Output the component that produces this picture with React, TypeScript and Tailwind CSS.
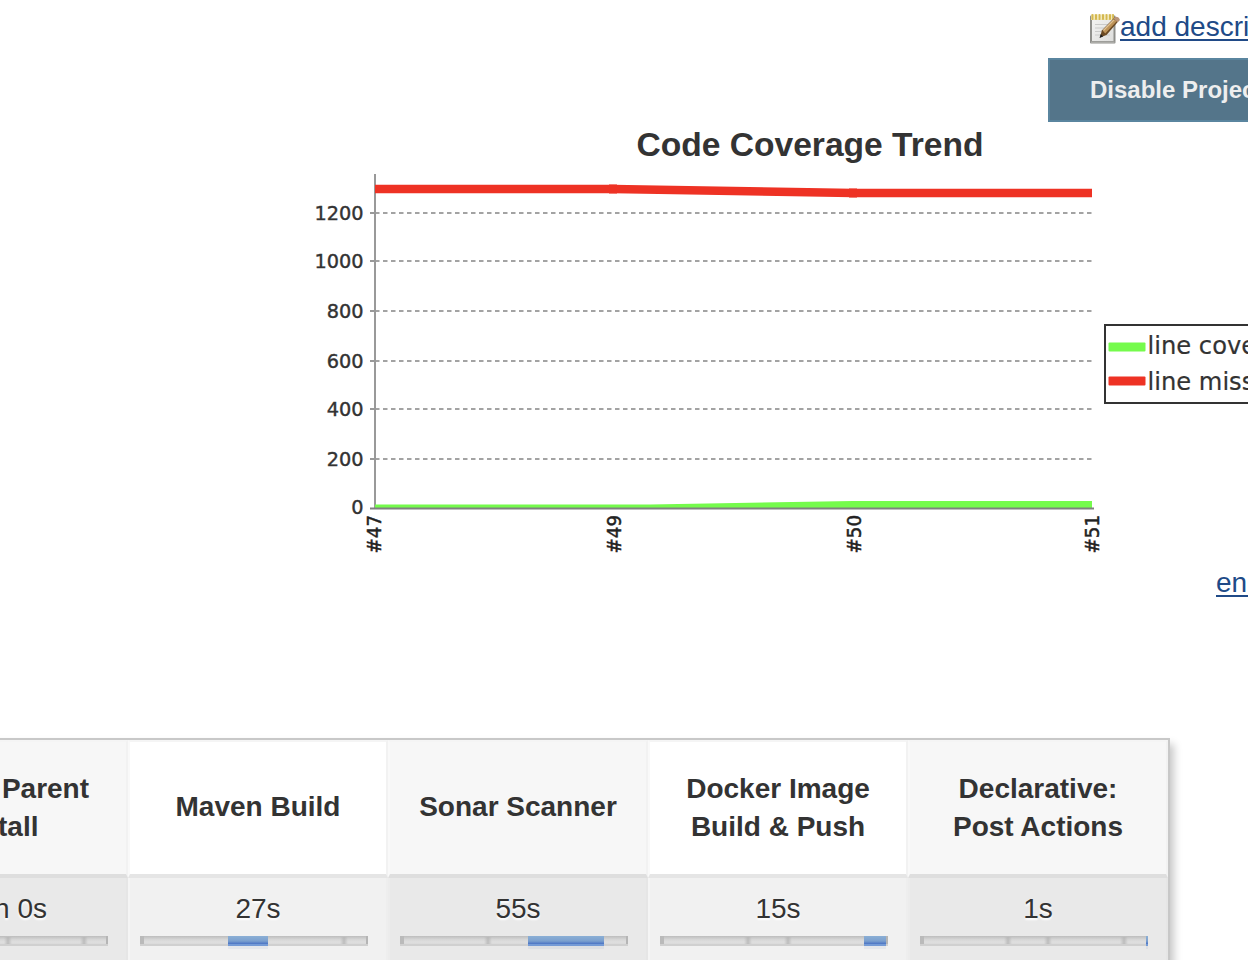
type Stage = { name: string[]; time: string; ticks: number[]; fill?: [number, number] };

const stages: Stage[] = [
  { name: ["Maven Parent", "Install"], time: "1min 0s", ticks: [128, 204] },
  { name: ["Maven Build"], time: "27s", ticks: [204], fill: [88, 40] },
  { name: ["Sonar Scanner"], time: "55s", ticks: [88], fill: [128, 76] },
  { name: ["Docker Image", "Build & Push"], time: "15s", ticks: [88, 128], fill: [204, 22] },
  { name: ["Declarative:", "Post Actions"], time: "1s", ticks: [88, 128, 204], fill: [226, 2] },
];

const grid: [number, string][] = [
  [213, "1200"],
  [261, "1000"],
  [311, "800"],
  [361, "600"],
  [409, "400"],
  [459, "200"],
];
const builds: [number, string][] = [
  [373, "#47"],
  [613, "#49"],
  [853, "#50"],
  [1091, "#51"],
];

function NotepadIcon() {
  return (
    <svg className="block h-8 w-8 shrink-0" viewBox="0 0 32 32">
      <defs>
        <linearGradient id="paper" x1="0" y1="0" x2="1" y2="1">
          <stop offset="0" stopColor="#f4f4f3" />
          <stop offset="1" stopColor="#dededc" />
        </linearGradient>
      </defs>
      <rect x="2" y="3.5" width="25.5" height="28" rx="1" fill="#8f8f8b" />
      <rect x="4" y="4" width="21.5" height="25" fill="url(#paper)" />
      <path d="M3 30.2H26.500" stroke="#b4b4b1" strokeWidth="1.200" />
      <path d="M7 12.500H20M7 16H17M7 19.500H14M7 23H12M18 23H22" stroke="#cacac9" strokeWidth="1" />
      <rect x="3" y="2.500" width="23" height="5.500" fill="#ede0a6" />
      <path d="M4.500 3v4M8 3v4M11.500 3v4M15 3v4M18.500 3v4M22 3v4M25 3v4" stroke="#d4b850" strokeWidth="2" strokeLinecap="round" />
      <path d="M6.300 3v4.500M9.800 3v4.500M13.300 3v4.500M16.800 3v4.500M20.300 3v4.500M23.600 3v4.500" stroke="#f3eac2" strokeWidth="1.100" />
      <path d="M12 25.500l1.800-7L26.500 5.500q3-1 5 2.500L18.500 23z" fill="#6b4a24" />
      <path d="M15 19L26.500 7.200l2.300 2L17.300 21.600z" fill="#bd9257" />
      <path d="M15.300 18.600L26 7.700" stroke="#e3c493" strokeWidth="1.400" />
      <path d="M25.500 6.500l2-1.800q3.500-.2 4.300 3.300l-2.200 2.200z" fill="#b99478" />
      <path d="M11.500 26l1.200-4 2.500 2.400z" fill="#222" />
    </svg>
  );
}

function CoverageChart() {
  return (
    <svg className="block h-[400px] w-[948px] shrink-0" viewBox="300 170 948 400" fontFamily="'DejaVu Sans', sans-serif">
      {grid.map(([y, label]) => (
        <g key={label}>
          <path d={`M375 ${y}H1092`} stroke="#a3a3a3" strokeWidth="2" strokeDasharray="4.500 3.500" />
          <path d={`M370 ${y}H376`} stroke="#999" strokeWidth="2" />
          <text x="363.500" y={y + 7} textAnchor="end" fontSize="19.300" fill="#333" stroke="#333" strokeWidth="0.400">{label}</text>
        </g>
      ))}
      <text x="363.500" y="514" textAnchor="end" fontSize="19.300" fill="#333" stroke="#333" strokeWidth="0.400">0</text>
      <path d="M375 174V508" stroke="#999" strokeWidth="2" />
      <path d="M375 189H613L853 193H1092" fill="none" stroke="#ee3224" strokeWidth="8.600" />
      <path d="M609 189h8M849 193h8" stroke="#ee3224" strokeWidth="9.200" />
      <path d="M375 504.500H650L853 501H1092V508H375z" fill="#75fb4c" />
      <path d="M370 508.500H1094" stroke="#808080" strokeWidth="2" />
      {builds.map(([x, label]) => (
        <text
          key={label}
          transform={`translate(${x + 7.5} 515) rotate(-90)`}
          textAnchor="end"
          fontSize="19.500"
          textLength="38.500"
          lengthAdjust="spacingAndGlyphs"
          fill="#222"
          stroke="#222"
          strokeWidth="0.500"
        >
          {label}
        </text>
      ))}
      <rect x="1105" y="325" width="200" height="78" fill="#fff" stroke="#333" strokeWidth="2" />
      <rect x="1108.500" y="342.500" width="37" height="9" rx="1" fill="#75fb4c" />
      <rect x="1108.500" y="376.500" width="37" height="9" rx="1" fill="#ee3224" />
      <text x="1147.500" y="354" fontSize="24.200" fill="#333" stroke="#333" strokeWidth="0.200">line covered</text>
      <text x="1147.500" y="390" fontSize="24.200" fill="#333" stroke="#333" strokeWidth="0.200">line missed</text>
    </svg>
  );
}

function StageBar({ ticks, fill }: { ticks: number[]; fill?: [number, number] }) {
  return (
    <svg className="block h-5 w-[228px] overflow-visible" viewBox="0 0 228 20">
      <defs>
        <linearGradient id="track" x1="0" y1="0" x2="0" y2="1">
          <stop offset="0" stopColor="#bdbdbd" />
          <stop offset="0.350" stopColor="#d6d6d6" />
          <stop offset="0.600" stopColor="#dfdfdf" />
          <stop offset="0.790" stopColor="#dadada" />
          <stop offset="0.800" stopColor="#d0d0d0" />
          <stop offset="1" stopColor="#d0d0d0" />
        </linearGradient>
        <linearGradient id="tick">
          <stop offset="0" stopColor="#b5b5b5" stopOpacity="0" />
          <stop offset="0.500" stopColor="#b5b5b5" />
          <stop offset="1" stopColor="#b5b5b5" stopOpacity="0" />
        </linearGradient>
        <linearGradient id="run" x1="0" y1="0" x2="0" y2="1">
          <stop offset="0" stopColor="#8bafd5" />
          <stop offset="0.500" stopColor="#7ba0cf" />
          <stop offset="0.790" stopColor="#4c75c5" />
          <stop offset="0.800" stopColor="#759bd6" />
          <stop offset="1" stopColor="#759bd6" />
        </linearGradient>
      </defs>
      <rect width="228" height="10" fill="url(#track)" />
      <rect width="4" height="8" fill="#bababa" />
      <rect x="226" width="2" height="8" fill="#b5b5b5" />
      {ticks.map((x) => (
        <rect key={x} x={x - 4} y="1" width="8" height="7" fill="url(#tick)" opacity="0.800" />
      ))}
      {fill && (
        <>
          <rect x={fill[0]} y="10" width={fill[1]} height="3" fill="#5577aa" opacity="0.080" />
          <rect x={fill[0]} width={fill[1]} height="10" fill="url(#run)" />
        </>
      )}
    </svg>
  );
}

export default function App() {
  return (
    <div className="flex h-[960px] w-[1248px] flex-col overflow-hidden bg-white font-['Liberation_Sans',Arial,sans-serif] text-[28px] text-[#333]">
      <div className="flex h-[58px] shrink-0 pl-[1088px] pt-3">
        <NotepadIcon />
        <a className="-mt-[3px] h-9 shrink-0 whitespace-nowrap leading-9 text-[#204a87] underline decoration-2 underline-offset-[3px]">add description</a>
      </div>
      <button className="ml-[1048px] h-16 w-[240px] shrink-0 whitespace-nowrap border-2 border-[#5a859f] bg-[#54758a] pl-10 text-left text-2xl font-bold text-[#eee]">
        Disable Project
      </button>
      <h2 className="ml-[510px] h-12 w-[600px] shrink-0 text-center text-[33.600px] font-bold leading-[46px]">Code Coverage Trend</h2>
      <div className="flex shrink-0 pl-[300px]">
        <CoverageChart />
      </div>
      <a className="ml-[1216px] h-9 shrink-0 whitespace-nowrap leading-[25px] text-[#204a87] underline decoration-2 underline-offset-[3px]">enlarge</a>
      <div className="-ml-[134px] mt-[132px] flex h-[300px] w-[1304px] shrink-0 border-2 border-[#c8c8c8] shadow-[4px_6px_8px_rgba(0,0,0,0.22)]">
        {stages.map((s, i) => (
          <div key={s.time} className={`w-[260px] shrink-0 ${i % 2 ? "bg-[#f1f1f1]" : "bg-[#e9e9e9]"}`}>
            <div className={`flex h-[138px] flex-col items-center justify-center border-2 border-b-4 border-l-[#f9f9f9] border-r-[#f2f2f2] border-t-[#f5f5f5] font-bold leading-[38px] ${i % 2 ? "border-b-[#e5e5e5] bg-white" : "border-b-[#dedede] bg-[#f7f7f7]"}`}>
              {s.name.map((n) => (
                <span key={n} className={s.name.length === 1 ? "-mt-0.5 whitespace-nowrap" : "whitespace-nowrap"}>{n}</span>
              ))}
            </div>
            <div className={`h-[160px] border-x-2 px-2.5 pt-[11px] ${i % 2 ? "border-l-[#f5f5f5] border-r-[#eee]" : "border-l-[#ececec] border-r-[#e6e6e6]"}`}>
              <div className="mb-[11px] h-9 text-center leading-10 [text-shadow:0_2px_2px_#fff]">{s.time}</div>
              <div className="pl-0">
                <StageBar ticks={s.ticks} fill={s.fill} />
              </div>
            </div>
          </div>
        ))}
      </div>
    </div>
  );
}
